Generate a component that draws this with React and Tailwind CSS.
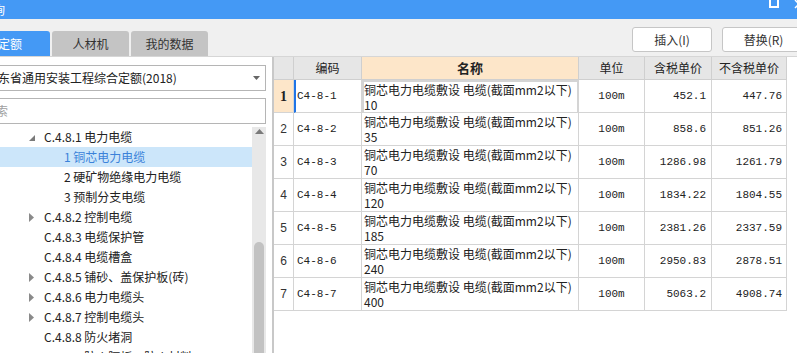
const tree = [
  { level: 1, label: "C.4.8.1 电力电缆", arrow: "open" },
  { level: 2, label: "1 铜芯电力电缆", selected: true },
  { level: 2, label: "2 硬矿物绝缘电力电缆" },
  { level: 2, label: "3 预制分支电缆" },
  { level: 1, label: "C.4.8.2 控制电缆", arrow: "closed" },
  { level: 1, label: "C.4.8.3 电缆保护管" },
  { level: 1, label: "C.4.8.4 电缆槽盒" },
  { level: 1, label: "C.4.8.5 铺砂、盖保护板(砖)", arrow: "closed" },
  { level: 1, label: "C.4.8.6 电力电缆头", arrow: "closed" },
  { level: 1, label: "C.4.8.7 控制电缆头", arrow: "closed" },
  { level: 1, label: "C.4.8.8 防火堵洞" },
  { level: 1, label: "C.4.8.9 防火隔板、防火材料" },
];

const rows = [
  ["C4-8-1", "10", "452.1", "447.76"],
  ["C4-8-2", "35", "858.6", "851.26"],
  ["C4-8-3", "70", "1286.98", "1261.79"],
  ["C4-8-4", "120", "1834.22", "1804.55"],
  ["C4-8-5", "185", "2381.26", "2337.59"],
  ["C4-8-6", "240", "2950.83", "2878.51"],
  ["C4-8-7", "400", "5063.2", "4908.74"],
];

const cols = "grid grid-cols-[20px_68px_217px_66px_67px_75px]";

function TreeArrow({ type }) {
  if (type === "open") {
    return (
      <svg width="6" height="6" viewBox="0 0 6 6" className="mt-[2px]">
        <polygon points="6,0 6,6 0,6" fill="#7a7a7a" />
      </svg>
    );
  }
  return (
    <svg width="5" height="9" viewBox="0 0 5 9">
      <polygon points="0,0 5,4.5 0,9" fill="#8a8a8a" />
    </svg>
  );
}

export default function App() {
  return (
    <div className="w-[797px] h-[353px] overflow-hidden bg-white font-['Noto_Sans_CJK_SC',sans-serif] text-[#222]">
      {/* title bar */}
      <div className="h-[19px] bg-[#4499f5] flex items-center justify-between">
        <span className="text-white text-[12px] leading-none -ml-[7px]">询</span>
        <div className="flex items-start h-full gap-[15px] -mr-[7px]">
          <svg width="10" height="8" viewBox="0 0 10 8">
            <rect x="1" y="-3" width="8" height="10" fill="none" stroke="white" strokeWidth="2" />
          </svg>
          <svg width="10" height="10" viewBox="0 0 10 10" className="mt-[-1px]">
            <path d="M1 1 L9 9 M9 1 L1 9" stroke="white" strokeWidth="1.5" />
          </svg>
        </div>
      </div>

      {/* toolbar / tabs */}
      <div className="h-[38px] bg-[#f0f0f0] border-b border-[#d6d6d6] flex justify-between">
        <div className="flex items-end gap-[2px] pt-[12px]">
          <div className="w-[50px] h-[25px] bg-[#4499f5] text-white text-[12px] flex items-center rounded-tr-[3px]">
            <span className="-ml-[2px]">定额</span>
          </div>
          <div className="w-[77px] h-[25px] bg-[#c4c4c4] text-[12px] text-[#333] flex items-center justify-center rounded-t-[3px]">
            人材机
          </div>
          <div className="w-[77px] h-[25px] bg-[#c4c4c4] text-[12px] text-[#333] flex items-center justify-center rounded-t-[3px]">
            我的数据
          </div>
        </div>
        <div className="flex items-start gap-[10px] pt-[8px] -mr-[8px]">
          <button className="w-[80px] h-[25px] bg-white border border-[#c6c6c6] rounded-[3px] text-[12px] text-[#333]">
            插入(I)
          </button>
          <button className="w-[83px] h-[25px] bg-white border border-[#c6c6c6] rounded-[3px] text-[12px] text-[#333]">
            替换(R)
          </button>
        </div>
      </div>

      {/* body */}
      <div className="flex h-[296px]">
        {/* left panel */}
        <div className="w-[266px] shrink-0 flex flex-col pt-[8px]">
          <div className="h-[26px] -ml-[20px] border border-[#b5b5b5] bg-white flex items-center justify-between pl-[5px] pr-[5px]">
            <span className="text-[12px] text-[#222]">广东省通用安装工程综合定额(2018)</span>
            <svg width="7" height="4" viewBox="0 0 7 4">
              <polygon points="0,0 7,0 3.5,4" fill="#666" />
            </svg>
          </div>
          <div className="h-[26px] mt-[7px] -ml-[20px] border border-[#b5b5b5] bg-white flex items-center pl-[3px]">
            <span className="text-[12px] text-[#a0a0a0]">搜索</span>
          </div>
          <div className="flex mt-[3px] flex-1 overflow-hidden">
            <div className="flex-1 flex flex-col">
              {tree.map((t, i) => (
                <div
                  key={i}
                  className={
                    "h-[20px] shrink-0 flex items-center text-[12px] whitespace-nowrap " +
                    (t.selected ? "bg-[#cce6fa] text-[#3b82d9]" : "")
                  }
                >
                  {t.level === 1 ? (
                    <>
                      <div className="w-[29px]" />
                      <div className="w-[15px] flex items-center">{t.arrow && <TreeArrow type={t.arrow} />}</div>
                    </>
                  ) : (
                    <div className="w-[64px]" />
                  )}
                  <span>{t.label}</span>
                </div>
              ))}
            </div>
            <div className="w-[14px] bg-[#e8e8e8] flex flex-col items-center">
              <svg width="9" height="5" viewBox="0 0 9 5" className="mt-[2px]">
                <polygon points="0,5 9,5 4.5,0" fill="#7a7a7a" />
              </svg>
              <div className="mt-[108px] w-[10px] flex-1 bg-[#c2c2c2] rounded-t-[5px]" />
            </div>
          </div>
        </div>

        <div className="w-[6px] shrink-0" />

        {/* right grid */}
        <div className="flex-1 border-l-2 border-[#c8c8c8]">
          <div className={cols + " h-[23px] text-[12px]"}>
            <div className="bg-[#e6e6e6] border-r border-b border-[#cfcfcf]" />
            <div className="bg-[#e6e6e6] border-r border-b border-[#cfcfcf] flex items-center justify-center">编码</div>
            <div className="bg-[#fde6c9] border-r border-b border-[#cfcfcf] flex items-center justify-center font-bold text-[13px]">名称</div>
            <div className="bg-[#e6e6e6] border-r border-b border-[#cfcfcf] flex items-center justify-center">单位</div>
            <div className="bg-[#e6e6e6] border-r border-b border-[#cfcfcf] flex items-center justify-center">含税单价</div>
            <div className="bg-[#e6e6e6] border-r border-b border-[#cfcfcf] flex items-center justify-center">不含税单价</div>
          </div>
          {rows.map((r, i) => {
            const first = i === 0;
            return (
              <div key={i} className={cols + " h-[33px] text-[12px]"}>
                <div
                  className={
                    "border-r border-b border-[#d4d4d4] flex items-center justify-center " +
                    (first
                      ? "bg-[#fde6c9] font-bold font-['Liberation_Serif',serif] text-[14px]"
                      : "font-['Liberation_Sans',sans-serif] text-[12px] text-[#333]")
                  }
                >
                  {i + 1}
                </div>
                <div
                  className={
                    "border-r border-b border-[#d4d4d4] flex items-center font-['Liberation_Mono',monospace] text-[11px] " +
                    (first ? "border-l-2 border-l-[#1f74e6] pl-[1px]" : "pl-[3px]")
                  }
                >
                  {r[0]}
                </div>
                <div
                  className={
                    "border-b border-[#d4d4d4] leading-[15px] whitespace-nowrap overflow-hidden " +
                    (first ? "border-2 border-[#1f74e6] pl-[0px] pt-[0px]" : "border-r pl-[2px] pt-[1px]")
                  }
                >
                  <div>铜芯电力电缆敷设 电缆(截面mm2以下)</div>
                  <div>{r[1]}</div>
                </div>
                <div className="border-r border-b border-[#d4d4d4] flex items-center justify-center font-['Liberation_Mono',monospace] text-[11px]">
                  100m
                </div>
                <div className="border-r border-b border-[#d4d4d4] flex items-center justify-end pr-[5px] font-['Liberation_Mono',monospace] text-[11px]">
                  {r[2]}
                </div>
                <div className="border-r border-b border-[#d4d4d4] flex items-center justify-end pr-[4px] font-['Liberation_Mono',monospace] text-[11px]">
                  {r[3]}
                </div>
              </div>
            );
          })}
        </div>
      </div>
    </div>
  );
}
